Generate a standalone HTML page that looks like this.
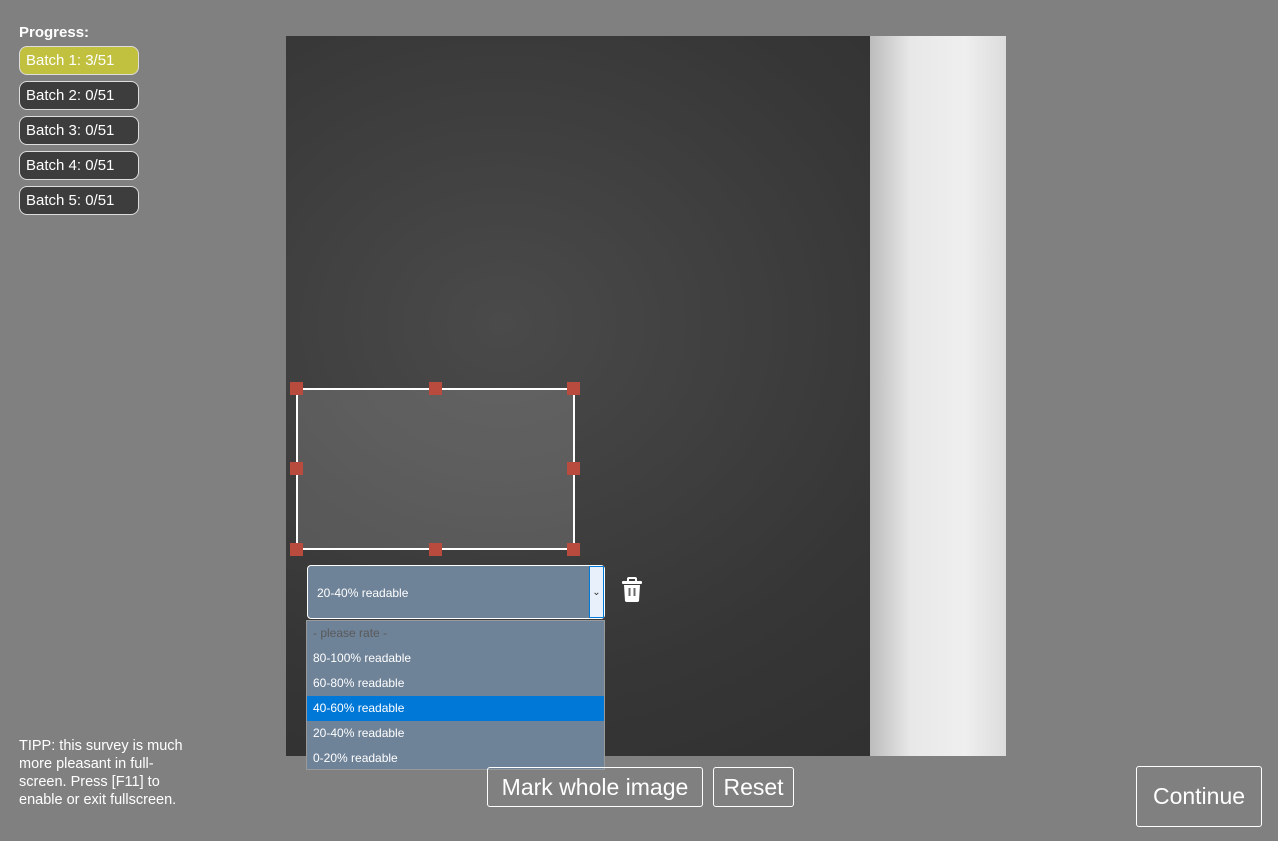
<!DOCTYPE html>
<html><head><style>
body{margin:0;width:1278px;height:841px;background:#808080;font-family:"Liberation Sans",Arial,sans-serif;position:relative;overflow:hidden;color:#fff}
.p{position:absolute;left:19px;top:24px;font-weight:bold;font-size:15px}
.b{position:absolute;left:19px;width:120px;border:1px solid #ddd;border-radius:8px;background:#3d3d3d;font-size:15px;line-height:27px;padding-left:6px;box-sizing:border-box;height:29px}
.img{position:absolute;left:286px;top:36px;width:720px;height:720px;background:radial-gradient(ellipse at 30% 40%,#4a4a4a,#363636 60%,#2e2e2e)}
.cloth{position:absolute;left:584px;top:0;width:136px;height:720px;background:linear-gradient(90deg,#bcbcbc,#e8e8e8 30%,#efefef 70%,#dcdcdc)}
.sel{position:absolute;left:307px;top:565px;width:298px;height:54px;background:#6e8298;border:1px solid #fff;border-radius:4px;box-sizing:border-box;font-size:12px;line-height:54px;padding-left:9px}
.arr{position:absolute;right:0;top:0;width:15px;height:52px;background:#e8f1fb;border:1px solid #0078d7;box-sizing:border-box;color:#333;font-size:10px;line-height:52px;text-align:center}
.dd{position:absolute;left:306px;top:620px;width:299px;height:150px;background:#6e8298;border:1px solid #999;box-sizing:border-box;font-size:12px}
.dd div{height:25px;line-height:25px;padding-left:6px}
.h{position:absolute;width:13px;height:13px;background:#b84a3e}
.btn{position:absolute;border:1px solid #fff;border-radius:3px;font-size:23px;text-align:center;box-sizing:border-box}
</style></head><body>
<div class="p">Progress:</div>
<div class="b" style="top:46px;background:#c2c03f">Batch 1: 3/51</div>
<div class="b" style="top:81px">Batch 2: 0/51</div>
<div class="b" style="top:116px">Batch 3: 0/51</div>
<div class="b" style="top:151px">Batch 4: 0/51</div>
<div class="b" style="top:186px">Batch 5: 0/51</div>
<div class="img"><div class="cloth"></div></div>
<div style="position:absolute;left:296px;top:388px;width:279px;height:162px;border:2px solid #fff;box-sizing:border-box;background:rgba(255,255,255,0.15)"></div>
<div class="h" style="left:290px;top:382px"></div><div class="h" style="left:429px;top:382px"></div><div class="h" style="left:567px;top:382px"></div>
<div class="h" style="left:290px;top:462px"></div><div class="h" style="left:567px;top:462px"></div>
<div class="h" style="left:290px;top:543px"></div><div class="h" style="left:429px;top:543px"></div><div class="h" style="left:567px;top:543px"></div>
<div class="sel">20-40% readable<div class="arr">&#8964;</div></div>
<svg style="position:absolute;left:621px;top:577px" width="22" height="26" viewBox="0 0 22 26"><rect x="7" y="1" width="8" height="4" rx="1" fill="none" stroke="#fff" stroke-width="2"/><rect x="1" y="4" width="20" height="3" rx="1" fill="#fff"/><path d="M3 8h16l-1 16a2 2 0 0 1-2 1H6a2 2 0 0 1-2-1z" fill="#fff"/><rect x="7.5" y="11" width="2" height="8" fill="#6a6a6a"/><rect x="12.5" y="11" width="2" height="8" fill="#6a6a6a"/></svg>
<div class="dd"><div style="color:#5a5a5a">- please rate -</div><div>80-100% readable</div><div>60-80% readable</div><div style="background:#0078d7">40-60% readable</div><div>20-40% readable</div><div>0-20% readable</div></div>
<div class="btn" style="left:487px;top:767px;width:216px;height:40px;line-height:38px">Mark whole image</div>
<div class="btn" style="left:713px;top:767px;width:81px;height:40px;line-height:38px">Reset</div>
<div class="btn" style="left:1136px;top:766px;width:126px;height:61px;line-height:59px">Continue</div>
<div style="position:absolute;left:19px;top:737px;width:200px;font-size:14.5px;line-height:18px;white-space:nowrap">TIPP: this survey is much<br>more pleasant in full-<br>screen. Press [F11] to<br>enable or exit fullscreen.</div>
</body></html>
